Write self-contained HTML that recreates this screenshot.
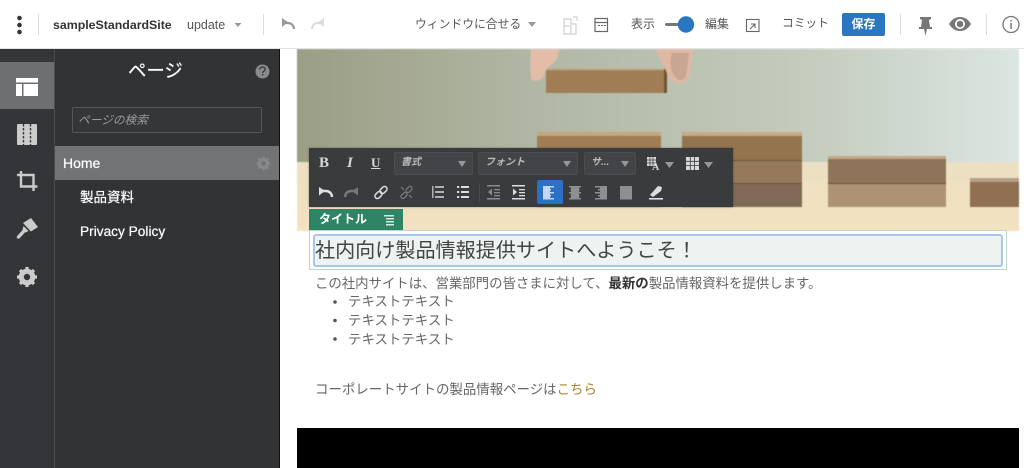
<!DOCTYPE html>
<html lang="ja"><head><meta charset="utf-8"><style>
html,body{margin:0;padding:0;width:1024px;height:468px;overflow:hidden;background:#fff}
body{font-family:"Liberation Sans","Noto Sans CJK JP",sans-serif;position:relative;color:#555}
.a{position:absolute;white-space:nowrap}
svg{position:absolute;left:0;top:0}
.sel{position:absolute;background:#434447;border:1px solid #4b4c4f;border-radius:2px;box-sizing:border-box;height:23px;top:152px;color:#bbb;font-size:10px;font-style:italic;line-height:19px;padding-left:6px;font-weight:bold}
.sel i{position:absolute;right:6px;top:8px;border:4px solid transparent;border-top:6px solid #96979a;border-bottom:0}
.w{text-shadow:0 0 .6px #fff}
</style></head><body>

<!-- photo -->
<svg width="1024" height="468" viewBox="0 0 1024 468" style="filter:blur(.5px)">
<defs>
<linearGradient id="w" x1="0" x2="1" y1="0" y2="0"><stop offset="0" stop-color="#9b9e85"/><stop offset=".31" stop-color="#b0b6a3"/><stop offset=".72" stop-color="#c5cdbf"/><stop offset="1" stop-color="#dce6e2"/></linearGradient>
<linearGradient id="t" x1="0" x2="0" y1="0" y2="1"><stop offset="0" stop-color="#ece0c4"/><stop offset=".6" stop-color="#f0e1c0"/><stop offset="1" stop-color="#f3e2c0"/></linearGradient>
</defs>
<rect x="297" y="49" width="722" height="114" fill="url(#w)"/>
<rect x="297" y="162" width="722" height="69" fill="url(#t)"/>
<!-- left finger -->
<path d="M531 49h28c0 7-3 13-7 15-5 3-7 8-9 13-3 4-10 5-12 2-1-10-1-20 0-30z" fill="#e3bda7"/>
<!-- blocks -->
<rect x="546" y="69" width="121" height="24" fill="#a07d54"/>
<rect x="546" y="69" width="121" height="1.500" fill="#b99a6f"/>
<rect x="664" y="69" width="3" height="24" fill="#6f5436"/>
<rect x="537" y="132" width="124" height="75" fill="#a07d54"/>
<rect x="537" y="132" width="124" height="4" fill="#c4a77e"/>
<rect x="682" y="132" width="120" height="28" fill="#94744f"/>
<rect x="682" y="132" width="120" height="4" fill="#c6ab84"/>
<rect x="682" y="160" width="120" height="23" fill="#96785a"/>
<rect x="682" y="183" width="120" height="24" fill="#7f6b55"/>
<rect x="828" y="156" width="118" height="27" fill="#8f745a"/>
<rect x="828" y="156" width="118" height="3" fill="#c3a988"/>
<rect x="828" y="183" width="118" height="24" fill="#ad9273"/>
<rect x="970" y="178" width="49" height="29" fill="#906f52"/>
<rect x="970" y="178" width="49" height="4" fill="#b5a08a"/>
<g stroke="#6a4f37" stroke-width="1"><path d="M682 160.500h120M682 183.500h120M828 183.500h118"/></g>
<!-- right finger -->
<path d="M656 49h37c-1 10-2 20-4 27-2 6-8 9-13 7-5-2-8-6-10-12-3-8-8-14-10-22z" fill="#dfb9a3"/>
<path d="M672 53h17c-1 9-2 17-3 23-2 4-6 5-9 3-3-3-5-6-6-11-1-6 0-11 1-15z" fill="#c9a593"/>
</svg>

<!-- black video -->
<div class="a" style="left:297px;top:428px;width:722px;height:40px;background:#000"></div>

<!-- left panels -->
<div class="a" style="left:0;top:49px;width:54px;height:419px;background:#343538"></div>
<div class="a" style="left:54px;top:49px;width:1px;height:419px;background:#4c4d50"></div>
<div class="a" style="left:55px;top:49px;width:224px;height:419px;background:#323335"></div>
<div class="a" style="left:279px;top:49px;width:1px;height:419px;background:#111"></div>
<div class="a" style="left:0;top:62px;width:54px;height:47px;background:#6e6f71"></div>
<div class="a" style="left:55px;top:146px;width:224px;height:34px;background:#727375"></div>

<!-- header -->
<div class="a" style="left:0;top:0;width:1024px;height:49px;background:#fff;border-bottom:1px solid #e3e3e3;box-sizing:border-box"></div>

<div class="a" style="left:53px;top:17px;font-size:12.350px;font-weight:bold;color:#333;line-height:16px">sampleStandardSite</div>
<div class="a" style="left:187px;top:17px;font-size:12.500px;color:#555;line-height:16px">update</div>
<div class="a" style="left:415px;top:15px;font-size:11.800px;color:#555;line-height:18px">ウィンドウに合せる</div>
<div class="a" style="left:631px;top:15px;font-size:12px;color:#555;line-height:18px">表示</div>
<div class="a" style="left:705px;top:15px;font-size:12px;color:#555;line-height:18px">編集</div>
<div class="a" style="left:782px;top:15px;font-size:11.700px;color:#555;line-height:18px">コミット</div>
<div class="a" style="left:842px;top:13px;width:43px;height:23px;background:#2b76c0;border-radius:2px;color:#fff;font-size:12px;font-weight:bold;text-align:center;line-height:23px">保存</div>

<!-- sidebar text -->
<div class="a w" style="left:128px;top:59px;font-size:18.400px;color:#fff;line-height:24px">ページ</div>
<div class="a" style="left:72px;top:107px;width:190px;height:26px;box-sizing:border-box;border:1px solid #555659;background:#353638;border-radius:2px;color:#9a9b9d;font-size:11.700px;font-style:italic;line-height:26px;padding-left:5px">ページの検索</div>
<div class="a w" style="left:63px;top:154px;font-size:14px;color:#fff;line-height:18px">Home</div>
<div class="a w" style="left:80px;top:189px;font-size:13.500px;color:#fff;line-height:18px">製品資料</div>
<div class="a w" style="left:80px;top:223px;font-size:13.700px;color:#fff;line-height:18px">Privacy Policy</div>

<!-- toolbar -->
<div class="a" style="left:309px;top:148px;width:424px;height:59px;background:#3a3b3d;box-shadow:0 0 2px rgba(0,0,0,.4)"></div>
<div class="sel" style="left:394px;width:79px">書式<i></i></div>
<div class="sel" style="left:478px;width:100px">フォント<i></i></div>
<div class="sel" style="left:584px;width:52px">サ...<i></i></div>
<div class="a" style="left:537px;top:180px;width:26px;height:24px;background:#2b70c4;border-radius:2px"></div>
<div class="a" style="left:319px;top:154px;font:bold 15px 'Liberation Serif',serif;color:#d8d8d8;line-height:18px">B</div>
<div class="a" style="left:347px;top:154px;font:italic bold 15px 'Liberation Serif',serif;color:#d8d8d8;line-height:18px">I</div>
<div class="a" style="left:371px;top:154px;font:bold 13px 'Liberation Serif',serif;color:#d8d8d8;line-height:18px;text-decoration:underline">U</div>

<!-- title tag & box -->
<div class="a" style="left:309px;top:209px;width:94px;height:21px;background:#2e8464"></div>
<div class="a" style="left:319px;top:210px;font-size:12px;font-weight:bold;color:#fff;line-height:19px">タイトル</div>
<div class="a" style="left:309px;top:230px;width:698px;height:40px;box-sizing:border-box;border:1px solid #bcd6cc;background:#fff"></div>
<div class="a" style="left:313px;top:234px;width:690px;height:33px;box-sizing:border-box;border:2px solid #a9c6ea;border-radius:3px;background:#edf3f1"></div>
<div class="a" style="left:315px;top:238px;font-size:20.100px;color:#444;line-height:27px">社内向け製品情報提供サイトへようこそ！</div>

<!-- content -->
<div class="a" style="left:315px;top:275px;font-size:13.400px;color:#666;line-height:18px">この社内サイトは、営業部門の皆さまに対して、<b style="color:#333">最新の</b>製品情報資料を提供します。</div>
<div class="a" style="left:348px;top:293px;font-size:13.450px;color:#666;line-height:18px">テキストテキスト</div>
<div class="a" style="left:348px;top:312px;font-size:13.450px;color:#666;line-height:18px">テキストテキスト</div>
<div class="a" style="left:348px;top:331px;font-size:13.450px;color:#666;line-height:18px">テキストテキスト</div>
<div class="a" style="left:315px;top:381px;font-size:13.450px;color:#666;line-height:18px">コーポレートサイトの製品情報ページは<span style="color:#a5852f">こちら</span></div>

<!-- icons -->
<svg width="1024" height="468" viewBox="0 0 1024 468">
<!-- header -->
<g fill="#333"><circle cx="19.500" cy="18" r="2.300"/><circle cx="19.500" cy="25" r="2.300"/><circle cx="19.500" cy="32" r="2.300"/></g>
<g fill="#ddd"><rect x="38" y="14" width="1" height="21"/><rect x="263" y="14" width="1" height="21"/><rect x="900" y="14" width="1" height="21"/><rect x="986" y="14" width="1" height="21"/></g>
<g fill="#999"><path d="M234.500 23h7l-3.500 4z"/><path d="M528 22h8l-4 5z"/></g>
<path d="M284 23h4a6 6 0 0 1 6 6" fill="none" stroke="#999" stroke-width="2.200"/><path d="M282 18v9l5.500-4.500 0-.5z" fill="#999"/>
<path d="M322 23h-4a6 6 0 0 0-6 6" fill="none" stroke="#ddd" stroke-width="2.200"/><path d="M324 18v9l-5.500-4.500 0-.5z" fill="#ddd"/>
<g fill="none" stroke="#d0d0d0" stroke-width="1.200"><path d="M564 19h7v5h5v10h-12z"/><path d="M564 26h7v8"/><path d="M573 17h4v4"/></g>
<g fill="none" stroke="#666" stroke-width="1.200"><rect x="595" y="18.500" width="12.500" height="13"/><path d="M595 22.500h12.500"/></g><path d="M598 25h2v1h-2zM601 25h2v1h-2zM604 25h2v1h-2z" fill="#666"/>
<rect x="665" y="23" width="22" height="3" rx="1.500" fill="#777"/><circle cx="686" cy="24.500" r="8.200" fill="#2b76c0"/>
<g fill="none" stroke="#666" stroke-width="1.100"><rect x="746.500" y="19.500" width="12.500" height="12"/><path d="M750 29l5-5M751 24h4v4"/></g>
<path d="M920 17h11v2l-2 1 1 7h2v2h-5l-1.500 7-1.500-7h-5v-2h2l1-7-2-1z" fill="#777"/>
<path d="M949 24c3-5 7-7 11-7s8 2 11 7c-3 5-7 7-11 7s-8-2-11-7z" fill="#777"/><circle cx="960" cy="24" r="5" fill="#fff"/><circle cx="960" cy="24" r="3.300" fill="#777"/>
<circle cx="1011" cy="24.500" r="8" fill="none" stroke="#777" stroke-width="1.300"/><rect x="1010.300" y="23" width="1.500" height="6" fill="#777"/><rect x="1010.300" y="20" width="1.500" height="1.600" fill="#777"/>

<!-- rail -->
<g fill="#fff"><rect x="16" y="78" width="22" height="4.500"/><rect x="16" y="84" width="6" height="12"/><rect x="23.500" y="84" width="14.500" height="12"/></g>
<rect x="17" y="124" width="20" height="21" fill="#ccc" rx="1"/>
<g stroke="#343538" stroke-width="1.400" stroke-dasharray="2.500 1.500" fill="none"><path d="M23.500 124v21M30.500 124v21"/></g>
<g fill="none" stroke="#ccc" stroke-width="2.400"><path d="M21 171v15.500h16.500"/><path d="M17 175h16.500v16"/></g>
<path d="M31 218l7 9-7 4.500-8-8.500z" fill="#ccc"/>
<path d="M23.500 226l5 5-3 1.500-3-3z" fill="#ccc"/>
<path d="M24 231l-5.500 6" stroke="#ccc" stroke-width="3.400" stroke-linecap="round" fill="none"/>
<g><circle cx="27" cy="277" r="6.500" fill="none" stroke="#ccc" stroke-width="3.500"/><path d="M27 267v20M17 277h20M20 270l14 14M34 270l-14 14" stroke="#ccc" stroke-width="3.200"/><circle cx="27" cy="277" r="3.200" fill="#343538"/></g>
<circle cx="262.500" cy="71.500" r="7" fill="#8a8b8d"/><path d="M259.800 69.500c0-1.500 1.200-2.500 2.700-2.500s2.700 1 2.700 2.300c0 1.800-2.500 1.800-2.500 3.700" fill="none" stroke="#333" stroke-width="1.300"/><rect x="262" y="74" width="1.400" height="1.500" fill="#333"/>
<circle cx="263.500" cy="163.500" r="4.500" fill="none" stroke="#87888a" stroke-width="2.500"/><path d="M263.500 156.500v14M256.500 163.500h14M258.500 158.500l10 10M268.500 158.500l-10 10" stroke="#87888a" stroke-width="2"/><circle cx="263.500" cy="163.500" r="2.300" fill="#727375"/>

<!-- toolbar row 1 right -->
<g fill="#d8d8d8"><rect x="647" y="157" width="9" height="9"/></g><g stroke="#3a3b3d" stroke-width=".7"><path d="M650 157v9M653 157v9M647 160h9M647 163h9"/></g>
<text x="652" y="170" font-family="Liberation Serif,serif" font-size="10" font-weight="bold" fill="#d8d8d8">A</text>
<path d="M665 162h9l-4.500 6zM704 162h9l-4.500 6z" fill="#96979a"/>
<rect x="686" y="157" width="13" height="13" fill="#d8d8d8"/><g stroke="#3a3b3d" stroke-width=".8"><path d="M690.300 157v13M694.600 157v13M686 161.300h13M686 165.600h13"/></g>

<!-- toolbar row 2 -->
<path d="M322 191h4a6 6 0 0 1 6 6" fill="none" stroke="#e0e0e0" stroke-width="2.400"/><path d="M319 187v8.500l6-4.500z" fill="#e0e0e0"/>
<path d="M355 191h-4a6 6 0 0 0-6 6" fill="none" stroke="#77787a" stroke-width="2.400"/><path d="M358 187v8.500l-6-4.500z" fill="#77787a"/>
<g fill="none" stroke="#ddd" stroke-width="1.500"><rect x="381" y="186" width="5" height="8" rx="2.500" transform="rotate(45 383.500 190)"/><rect x="376" y="191" width="5" height="8" rx="2.500" transform="rotate(45 378.500 195)"/></g>
<g fill="none" stroke="#77787a" stroke-width="1.300"><rect x="407" y="186" width="4" height="7" rx="2" transform="rotate(45 409 189.500)"/><rect x="402" y="192" width="4" height="7" rx="2" transform="rotate(45 404 195.500)"/><path d="M401 187l3 3M412 198l-3-3"/></g>
<g fill="#b0b1b3"><rect x="435" y="186" width="9" height="2"/><rect x="435" y="191" width="9" height="2"/><rect x="435" y="196" width="9" height="2"/><rect x="432" y="186" width="1.500" height="12"/></g>
<g fill="#ddd"><rect x="457" y="186" width="2.200" height="2"/><rect x="457" y="191" width="2.200" height="2"/><rect x="457" y="196" width="2.200" height="2"/><rect x="461" y="186" width="8" height="2"/><rect x="461" y="191" width="8" height="2"/><rect x="461" y="196" width="8" height="2"/></g>
<rect x="479" y="183" width="1" height="19" fill="#4a4b4d"/>
<g fill="#8a8b8d"><rect x="487" y="185" width="13" height="1.500"/><rect x="487" y="198" width="13" height="1.500"/><rect x="494" y="189" width="6" height="1.300"/><rect x="494" y="192" width="6" height="1.300"/><rect x="494" y="195" width="6" height="1.300"/><path d="M492 188.500v7l-4-3.500z"/></g>
<g fill="#ddd"><rect x="512" y="185" width="13" height="1.500"/><rect x="512" y="198" width="13" height="1.500"/><rect x="519" y="189" width="6" height="1.300"/><rect x="519" y="192" width="6" height="1.300"/><rect x="519" y="195" width="6" height="1.300"/><path d="M513 188.500v7l4-3.500z"/></g>
<g fill="#c5d8f0"><path d="M543 186h11v1.500h-11zM543 189h8v1.500h-8zM543 192h11v1.500h-11zM543 195h8v1.500h-8zM543 198h11v1.500h-11z"/><rect x="543" y="186" width="7" height="13.500"/></g>
<g fill="#8e8f91"><path d="M569 186h12v1.500h-12zM570.500 189h9v1.500h-9zM569 192h12v1.500h-12zM570.500 195h9v1.500h-9zM569 198h12v1.500h-12z"/><rect x="571" y="186" width="8" height="13.500"/></g>
<g fill="#8e8f91"><path d="M595 186h12v1.500h-12zM598 189h9v1.500h-9zM595 192h12v1.500h-12zM598 195h9v1.500h-9zM595 198h12v1.500h-12z"/><rect x="600" y="186" width="7" height="13.500"/></g>
<rect x="620" y="186" width="12" height="13.500" fill="#8e8f91"/>
<path d="M650 195l8-9 4 1-1 4-8 6z" fill="#ddd"/><rect x="649" y="198" width="14" height="1.600" fill="#ddd"/>

<!-- tag menu icon -->
<g fill="#d7ebe3"><rect x="384" y="215" width="10" height="1.500"/><rect x="386" y="218" width="8" height="1.500"/><rect x="386" y="221" width="8" height="1.500"/><rect x="386" y="224" width="8" height="1.500"/></g>

<!-- bullets -->
<g fill="#555"><circle cx="335" cy="302" r="1.800"/><circle cx="335" cy="320.500" r="1.800"/><circle cx="335" cy="339" r="1.800"/></g>
</svg>
</body></html>
